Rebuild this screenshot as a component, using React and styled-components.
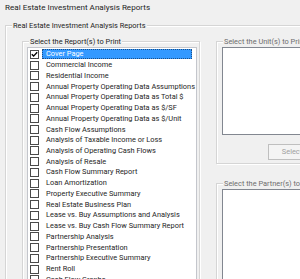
import React from "react";
import styled, { createGlobalStyle } from "styled-components";

const GlobalStyle = createGlobalStyle`
  html, body {
    margin: 0;
    padding: 0;
    background: #f0f0f0;
  }
`;

const reports = [
  "Cover Page",
  "Commercial Income",
  "Residential Income",
  "Annual Property Operating Data Assumptions",
  "Annual Property Operating Data as Total $",
  "Annual Property Operating Data as $/SF",
  "Annual Property Operating Data as $/Unit",
  "Cash Flow Assumptions",
  "Analysis of Taxable Income or Loss",
  "Analysis of Operating Cash Flows",
  "Analysis of Resale",
  "Cash Flow Summary Report",
  "Loan Amortization",
  "Property Executive Summary",
  "Real Estate Business Plan",
  "Lease vs. Buy Assumptions and Analysis",
  "Lease vs. Buy Cash Flow Summary Report",
  "Partnership Analysis",
  "Partnership Presentation",
  "Partnership Executive Summary",
  "Rent Roll",
  "Cash Flow Graphs",
];

const Window = styled.div`
  width: 300px;
  height: 279px;
  overflow: hidden;
  background: #f0f0f0;
  font-family: Roboto, "Noto Sans", sans-serif;
  font-size: 7.4px;
  color: #1e1e1e;
  box-sizing: border-box;
  padding: 0 0 0 5px;
`;

const Title = styled.div`
  height: 14px;
  line-height: 14px;
  font-size: 8.1px;
`;

const Group = styled.div`
  position: relative;
  border: 1px solid #d5d5d5;
  box-shadow: inset 1px 1px 0 #ffffff, 1px 1px 0 #ffffff;
  box-sizing: border-box;
  width: ${({ $width }) => $width};
  height: ${({ $height }) => $height || "auto"};
  margin-top: ${({ $top }) => $top || "0px"};
  padding: ${({ $pad }) => $pad};
`;

const GroupLabel = styled.span`
  position: absolute;
  top: -6px;
  left: 6px;
  padding: 0 1px;
  line-height: 11px;
  background: #f0f0f0;
  white-space: nowrap;
  color: ${({ $muted }) => ($muted ? "#6d6d6d" : "#1e1e1e")};
`;

const Columns = styled.div`
  display: flex;
  gap: 16px;
  align-items: flex-start;
`;

const RightColumn = styled.div`
  display: flex;
  flex-direction: column;
`;

const ListBox = styled.div`
  background: #ffffff;
  border: 1px solid #828790;
  box-sizing: border-box;
  width: ${({ $width }) => $width};
  height: ${({ $height }) => $height};
  overflow: hidden;
`;

const CheckList = styled(ListBox)`
  border-color: #c4c6cc;
  padding-top: 1px;
`;

const Row = styled.div`
  display: flex;
  align-items: center;
  height: 10.74px;
  padding-left: 2px;
`;

const Box = styled.span`
  flex: none;
  width: 9px;
  height: 9px;
  box-sizing: border-box;
  border: 1px solid #4a4a4a;
  background: #ffffff;
  margin-right: 3px;
  display: flex;
  align-items: center;
  justify-content: center;
`;

const ItemText = styled.span`
  flex: 1;
  height: 10px;
  line-height: 10px;
  padding-left: 4px;
  margin-right: 4px;
  white-space: nowrap;
  box-sizing: border-box;
  background: ${({ $selected }) => ($selected ? "#3399ff" : "transparent")};
  color: ${({ $selected }) => ($selected ? "#ffffff" : "#1e1e1e")};
  outline: ${({ $selected }) => ($selected ? "1px dotted #1c4f86" : "none")};
  outline-offset: -1px;
`;

const ButtonRow = styled.div`
  display: flex;
  padding: 9px 0 0 46px;
`;

const Button = styled.div`
  width: 60px;
  height: 16px;
  line-height: 14px;
  box-sizing: border-box;
  border: 1px solid #bfbfbf;
  background: #f4f4f4;
  color: #a0a0a0;
  text-align: center;
  padding-right: 12px;
`;

const Check = () => (
  <svg width="7" height="7" viewBox="0 0 7 7">
    <path d="M0.8 3.2 L2.6 5.1 L6.2 1.2" fill="none" stroke="#000" strokeWidth="1.4" />
  </svg>
);

export default function App() {
  return (
    <>
      <GlobalStyle />
      <Window>
        <Title>Real Estate Investment Analysis Reports</Title>
        <Group $width="330px" $height="300px" $top="11px" $pad="15px 0 0 16px">
          <GroupLabel>Real Estate Investment Analysis Reports</GroupLabel>
          <Columns>
            <Group $width="178px" $height="300px" $pad="5px 2px 0 4px">
              <GroupLabel>Select the Report(s) to Print</GroupLabel>
              <CheckList $width="170px" $height="300px">
                {reports.map((r, i) => (
                  <Row key={r}>
                    <Box>{i === 0 && <Check />}</Box>
                    <ItemText $selected={i === 0}>{r}</ItemText>
                  </Row>
                ))}
              </CheckList>
            </Group>
            <RightColumn>
              <Group $width="120px" $height="123px" $pad="5px 0 0 5px">
                <GroupLabel $muted>Select the Unit(s) to Print</GroupLabel>
                <ListBox $width="110px" $height="88px" />
                <ButtonRow>
                  <Button>Select</Button>
                </ButtonRow>
              </Group>
              <Group $width="120px" $height="120px" $top="19px" $pad="5px 0 0 5px">
                <GroupLabel $muted>Select the Partner(s) to Print</GroupLabel>
                <ListBox $width="110px" $height="120px" />
              </Group>
            </RightColumn>
          </Columns>
        </Group>
      </Window>
    </>
  );
}
